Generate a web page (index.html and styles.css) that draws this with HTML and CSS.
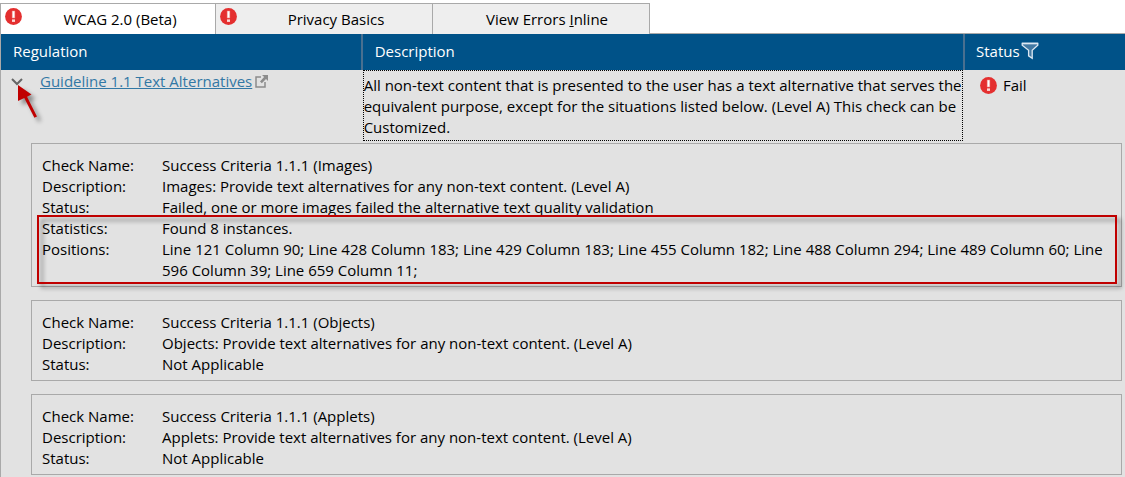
FILE: index.html
```html
<!DOCTYPE html>
<html lang="en">
  <head>
    <meta charset="UTF-8" />
    <meta name="viewport" content="width=device-width, initial-scale=1.0" />
    <title>Compliance Results</title>
    <link rel="stylesheet" href="styles.css">
  </head>
  <body>
    <!-- Shared icons -->
    <svg class="icon-defs" aria-hidden="true">
      <symbol id="icon-fail" viewBox="0 0 17 17">
        <circle cx="8.5" cy="8.5" r="8.4" fill="#e42f2f" />
        <path d="M6.9 2.8h3.2v7.4H6.9z" fill="#f4a3a0" />
        <path d="M7.7 3.3h1.6v6.3H7.7z" fill="#fff" />
        <path d="M7 11.4h3v2.5H7z" fill="#fbdad8" />
      </symbol>
    </svg>

    <nav class="tabs">
      <button type="button" class="tab active">
        <svg class="tab-icon"><use href="#icon-fail" /></svg>
        WCAG 2.0 (Beta)
      </button>
      <button type="button" class="tab">
        <svg class="tab-icon"><use href="#icon-fail" /></svg>
        Privacy Basics
      </button>
      <button type="button" class="tab">View Errors <u>I</u>nline</button>
    </nav>

    <table class="results">
      <thead>
        <tr>
          <th class="col-regulation">Regulation</th>
          <th>Description</th>
          <th class="col-status">
            <div class="status-head">
              Status
              <button type="button" class="filter-button" aria-label="Filter">
                <svg width="18" height="18" viewBox="0 0 18 18">
                  <path d="M1.2 1.5h15.6v1.8l-5.6 5v8l-3.6-2.5V8.3L1.2 3.3z" fill="#4279a3" stroke="#dce8f2" stroke-width="1.3" />
                  <path d="M1 1.4h16" stroke="#dce8f2" stroke-width="1.4" />
                </svg>
              </button>
            </div>
          </th>
        </tr>
      </thead>
      <tbody>
        <tr class="guideline">
          <td>
            <div class="guideline-name">
              <button type="button" class="expand-button" aria-label="Collapse">
                <svg width="12" height="8" viewBox="0 0 12 8">
                  <path d="M1 1l5 5 5-5" fill="none" stroke="#666" stroke-width="2" />
                </svg>
                <svg class="pointer" width="30" height="46" viewBox="0 0 30 46">
                  <path d="M1 1l13.5 9.5-4.5 2.2 10 19.8-2.6 1.3L7.3 14 1 17z" fill="#c00000" />
                </svg>
              </button>
              <a href="#">Guideline 1.1 Text Alternatives</a>
              <svg width="13" height="13" viewBox="0 0 13 13">
                <path d="M6 2H1v10h9V7" fill="none" stroke="#8c8c8c" stroke-width="1.5" />
                <path d="M7 0h6v6l-2-2-4.2 4.2-1.8-1.8L9.1 2.1z" fill="#8c8c8c" />
              </svg>
            </div>
          </td>
          <td class="guideline-text">
            <p>All non-text content that is presented to the user has a text alternative that serves the equivalent purpose, except for the situations listed below. (Level A) This check can be Customized.</p>
          </td>
          <td>
            <div class="status">
              <svg width="17" height="17"><use href="#icon-fail" /></svg>
              Fail
            </div>
          </td>
        </tr>
        <tr>
          <td colspan="3" class="checks">
            <dl class="check">
              <dt>Check Name:</dt>
              <dd>Success Criteria 1.1.1 (Images)</dd>
              <dt>Description:</dt>
              <dd>Images: Provide text alternatives for any non-text content. (Level A)</dd>
              <dt>Status:</dt>
              <dd>Failed, one or more images failed the alternative text quality validation</dd>
              <dt>Statistics:</dt>
              <dd>Found 8 instances.</dd>
              <dt>Positions:</dt>
              <dd>Line 121 Column 90; Line 428 Column 183; Line 429 Column 183; Line 455 Column 182; Line 488 Column 294; Line 489 Column 60; Line 596 Column 39; Line 659 Column 11;</dd>
              <div class="highlight"></div>
            </dl>
            <dl class="check">
              <dt>Check Name:</dt>
              <dd>Success Criteria 1.1.1 (Objects)</dd>
              <dt>Description:</dt>
              <dd>Objects: Provide text alternatives for any non-text content. (Level A)</dd>
              <dt>Status:</dt>
              <dd>Not Applicable</dd>
            </dl>
            <dl class="check">
              <dt>Check Name:</dt>
              <dd>Success Criteria 1.1.1 (Applets)</dd>
              <dt>Description:</dt>
              <dd>Applets: Provide text alternatives for any non-text content. (Level A)</dd>
              <dt>Status:</dt>
              <dd>Not Applicable</dd>
            </dl>
          </td>
        </tr>
      </tbody>
    </table>
  </body>
</html>
```

FILE: styles.css
```css
* {
  box-sizing: border-box;
}

body {
  font-family: "Segoe UI", "Open Sans", sans-serif;
  font-size: 15px;
  line-height: 21px;
  color: black;
  background-color: white;
  margin: 0;
  padding-top: 3px;
}

button {
  font: inherit;
  color: inherit;
  border: none;
  padding: 0;
  background: none;
  cursor: pointer;
}

svg {
  display: block;
  flex-shrink: 0;
}

.icon-defs {
  display: none;
}

/* Tabs */
.tabs {
  display: flex;
  box-shadow: inset 0 -1px #a9a9a9;
}

.tab {
  position: relative;
  width: 217px;
  height: 31px;
  padding-left: 24px;
  border: 1px solid #a9a9a9;
  border-left: none;
  border-bottom: none;
  background-color: #eee;
}

.tab:first-child {
  width: 216px;
  border-left: 1px solid #a9a9a9;
}

.tab:last-child {
  padding-left: 12px;
}

.tab.active {
  background-color: white;
}

.tab-icon {
  position: absolute;
  top: 4px;
  left: 4px;
  width: 17px;
  height: 17px;
}

/* Results table */
.results {
  width: 100%;
  table-layout: fixed;
  border-spacing: 0;
  border-left: 1px solid #a9a9a9;
  background-color: #e2e2e2;
}

.results th {
  height: 36px;
  padding: 0 12px 2px;
  background-color: #005288;
  color: white;
  font-weight: normal;
  text-align: left;
}

.results th + th {
  border-left: 2px solid #4a7090;
}

.results .col-regulation {
  width: 32%;
}

.results .col-status {
  width: 162px;
  padding-left: 11px;
}

.results td {
  padding: 0;
  vertical-align: top;
}

.status-head {
  display: flex;
  align-items: center;
  gap: 1px;
}

.guideline-name {
  display: flex;
  align-items: center;
  gap: 3px;
  padding: 1px 0 0 10px;
}

.guideline-name a {
  color: #3278a5;
}

.expand-button {
  position: relative;
  width: 26px;
}

/* Red arrow drawn over the row, pointing at the expander */
.pointer {
  position: absolute;
  top: 6px;
  left: 6px;
  filter: drop-shadow(4px 4px 2px rgba(0, 0, 0, 0.4));
}

.guideline-text p {
  margin: 0 0 0 2px;
  padding: 4px 0 2px;
  border: 1px dotted black;
}

.status {
  display: flex;
  align-items: center;
  gap: 6px;
  padding: 5px 0 0 17px;
}

/* Check details */
.results .checks {
  padding: 2px 3px 2px 30px;
}

.check {
  position: relative;
  display: grid;
  grid-template-columns: 120px 1fr;
  margin: 0 0 13px;
  padding: 11px 6px 5px 10px;
  border: 1px solid #a9a9a9;
}

.check:last-child {
  margin-bottom: 0;
}

.check dd {
  margin: 0;
}

.highlight {
  position: absolute;
  top: 71px;
  right: 4px;
  bottom: 2px;
  left: 5px;
  border: 2px solid #c00000;
  filter: drop-shadow(4px 4px 2px rgba(0, 0, 0, 0.4));
}
```
